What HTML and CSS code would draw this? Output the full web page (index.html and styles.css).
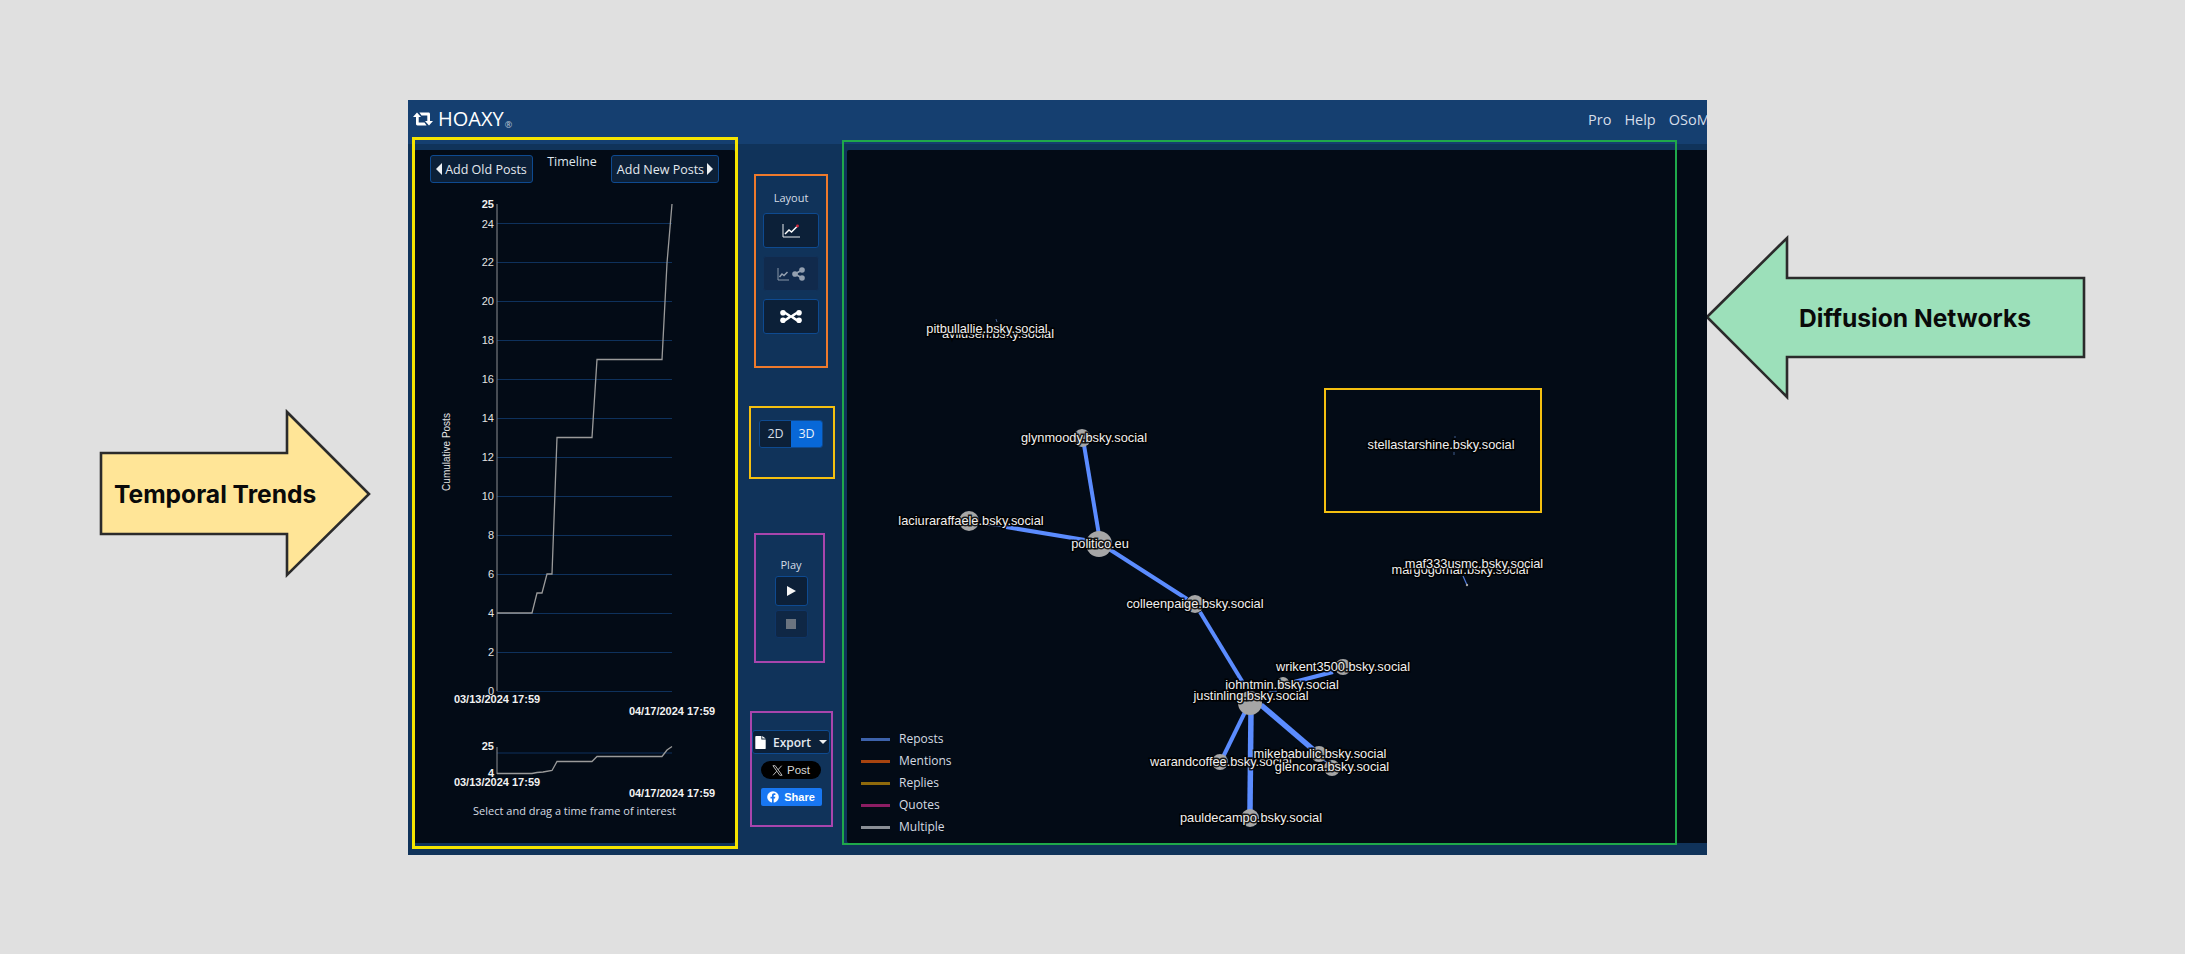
FILE: index.html
```html
<!doctype html>
<html>
	<head>
		<title>Hoaxy</title>
		<link rel="stylesheet" href="styles.css">
	</head>
	<body>
		<div class="slide">

			<svg class="arrow arrow-temporal" viewBox="90 400 300 190">
				<polygon points="101,453 287,453 287,412 369,494 287,575 287,534 101,534"></polygon>
			</svg>
			<div class="arrow-label label-temporal">Temporal Trends</div>

			<svg class="arrow arrow-diffusion" viewBox="1700 230 390 175">
				<polygon points="1707,317 1787,238 1787,278 2084,278 2084,357 1787,357 1787,397"></polygon>
			</svg>
			<div class="arrow-label label-diffusion">Diffusion Networks</div>

			<div class="app">
				<div class="nav">
					<div class="brand">
						<svg class="brand-icon" viewBox="0 0 20 14">
							<path d="M0 5 4 .5 8 5H5.7V10.6H11.5L13.6 13.4H4.6C3.5 13.4 3 12.8 3 11.8V5Z"></path>
							<path d="M20 9 16 13.5 12 9H14.3V3.4H8.5L6.4 .6H15.4C16.5 .6 17 1.2 17 2.2V9Z"></path>
						</svg>
						<span class="brand-name">HOAXY</span><span class="brand-mark">®</span>
					</div>
					<div class="nav-links">
						<span>Pro</span>
						<span>Help</span>
						<span class="nav-cut">OSoMe</span>
					</div>
				</div>

				<div class="main">
					<div class="timeline">
						<div class="timeline-head">
							<div class="btn btn-posts btn-old"><span class="tri tri-left"></span>Add Old Posts</div>
							<div class="timeline-title">Timeline</div>
							<div class="btn btn-posts btn-new">Add New Posts<span class="tri tri-right"></span></div>
						</div>
						<svg class="chart" viewBox="414 190 321 610">
							<g class="grid">
								<line x1="497" x2="672" y1="223.5" y2="223.5"></line>
								<line x1="497" x2="672" y1="262.5" y2="262.5"></line>
								<line x1="497" x2="672" y1="301.5" y2="301.5"></line>
								<line x1="497" x2="672" y1="340.5" y2="340.5"></line>
								<line x1="497" x2="672" y1="379.5" y2="379.5"></line>
								<line x1="497" x2="672" y1="418.5" y2="418.5"></line>
								<line x1="497" x2="672" y1="457.5" y2="457.5"></line>
								<line x1="497" x2="672" y1="496.5" y2="496.5"></line>
								<line x1="497" x2="672" y1="535.5" y2="535.5"></line>
								<line x1="497" x2="672" y1="574.5" y2="574.5"></line>
								<line x1="497" x2="672" y1="613.5" y2="613.5"></line>
								<line x1="497" x2="672" y1="652.5" y2="652.5"></line>
								<line x1="497" x2="672" y1="691.5" y2="691.5"></line>
								<line x1="497" x2="672" y1="753" y2="753"></line>
							</g>
							<line class="axis" x1="497" x2="497" y1="204" y2="691"></line>
							<line class="axis" x1="497" x2="497" y1="747" y2="774"></line>
							<polyline class="trend" points="497,613 532,613 537,593 542,593 547,574 552,574 557,437.5 592,437.5 597,359.5 662,359.5 667,263 672,204"></polyline>
							<polyline class="trend" points="497,773.5 532,773.5 537,772.5 543,772 552,770.5 557,761.5 592,761.5 597,756.5 662,756.5 667,750 672,746.5"></polyline>
							<g class="ticks">
								<text class="tick-top" x="494" y="208">25</text>
								<text x="494" y="228">24</text>
								<text x="494" y="266">22</text>
								<text x="494" y="305">20</text>
								<text x="494" y="344">18</text>
								<text x="494" y="383">16</text>
								<text x="494" y="422">14</text>
								<text x="494" y="461">12</text>
								<text x="494" y="500">10</text>
								<text x="494" y="539">8</text>
								<text x="494" y="578">6</text>
								<text x="494" y="617">4</text>
								<text x="494" y="656">2</text>
								<text x="494" y="695">0</text>
								<text class="tick-top" x="494" y="750">25</text>
								<text class="tick-top" x="494" y="777">4</text>
							</g>
							<text class="axis-title" transform="translate(450 452) rotate(-90)">Cumulative Posts</text>
							<text class="date" x="497" y="703">03/13/2024 17:59</text>
							<text class="date" x="672" y="715">04/17/2024 17:59</text>
							<text class="date" x="497" y="786">03/13/2024 17:59</text>
							<text class="date" x="672" y="797">04/17/2024 17:59</text>
						</svg>
						<div class="timeline-hint">Select and drag a time frame of interest</div>
					</div>

					<div class="controls">
						<div class="ctl-label ctl-layout">Layout</div>
						<div class="btn btn-layout">
							<svg class="icon-chart" viewBox="0 0 18 14">
								<path class="ic-axis" d="M1 0V13H18"></path>
								<path class="ic-line" d="M3 10 7 6 9.5 8 15 2.5"></path>
								<circle class="ic-red" cx="15.5" cy="2" r="1.4"></circle>
							</svg>
						</div>
						<div class="btn btn-layout btn-off">
							<svg class="icon-mixed" viewBox="0 0 29 14">
								<path class="ic-axis" d="M1 1V13H12"></path>
								<path class="ic-line" d="M2.5 10 5 7 7 8.5 10.5 5"></path>
								<path class="ic-link" d="M25 3 18 7 25 11"></path>
								<circle class="ic-dot" cx="25" cy="3" r="2.8"></circle>
								<circle class="ic-dot" cx="18" cy="7" r="2.8"></circle>
								<circle class="ic-dot" cx="25" cy="11" r="2.8"></circle>
							</svg>
						</div>
						<div class="btn btn-layout">
							<svg class="icon-net" viewBox="0 0 22 13">
								<path class="ic-link ic-bold" d="M3 2.5C8 3 9 6.500 11 6.500S14 3 19 2.500M3 10.500C8 10 9 6.500 11 6.500S14 10 19 10.500"></path>
								<circle class="ic-dot" cx="3" cy="2.800" r="2.800"></circle>
								<circle class="ic-dot" cx="3" cy="10.200" r="2.800"></circle>
								<circle class="ic-dot" cx="19" cy="2.800" r="2.800"></circle>
								<circle class="ic-dot" cx="19" cy="10.200" r="2.800"></circle>
							</svg>
						</div>

						<div class="dim-switch">
							<div class="dim dim-2d">2D</div>
							<div class="dim dim-3d">3D</div>
						</div>

						<div class="ctl-label ctl-play">Play</div>
						<div class="btn btn-play"><span class="play-tri"></span></div>
						<div class="btn btn-stop"><span class="stop-box"></span></div>

						<div class="btn btn-export">
							<svg class="icon-file" viewBox="0 0 12 15">
								<path d="M0 1C0 .4.4 0 1 0H7V4H12V14C12 14.600 11.600 15 11 15H1C.4 15 0 14.600 0 14ZM8 0 12 3H8Z"></path>
							</svg>
							<span>Export</span>
							<span class="caret"></span>
						</div>
						<div class="btn-x">
							<svg class="icon-x" viewBox="0 0 12 12">
								<path class="x-thin" d="M1 .8H3.500L11 11.200H8.500ZM10.500.8 6.500 5.300M5.200 6.700 1.200 11.200"></path>
							</svg>
							<span>Post</span>
						</div>
						<div class="btn-fb">
							<svg class="icon-fb" viewBox="0 0 12 12">
								<circle cx="6" cy="6" r="5.800"></circle>
								<path class="fb-f" d="M5 12V7.600H3.500V5.800H5V4.500C5 3.100 5.900 2.300 7.100 2.300L8.400 2.400V3.900H7.600C6.900 3.900 6.700 4.300 6.700 4.800V5.800H8.300L8 7.600H6.700V12Z"></path>
							</svg>
							<span>Share</span>
						</div>
					</div>

					<div class="network">
						<svg class="graph" viewBox="846 150 862 693">
							<g class="edges">
								<line class="e-mid" x1="1083" y1="445" x2="1098" y2="535"></line>
								<line class="e-mid" x1="1005" y1="527" x2="1090" y2="541"></line>
								<line class="e-thin" x1="985" y1="525" x2="1005" y2="527"></line>
								<line class="e-mid" x1="1108" y1="549" x2="1186" y2="599"></line>
								<line class="e-mid" x1="1199" y1="612" x2="1244" y2="686"></line>
								<line class="e-mid" x1="1245" y1="710" x2="1222" y2="757"></line>
								<line class="e-wide" x1="1250" y1="710" x2="1249" y2="810"></line>
								<line class="e-wide" x1="1260" y1="705" x2="1315" y2="752"></line>
								<line class="e-mid" x1="1293" y1="682" x2="1332" y2="672"></line>
								<line class="e-thin" x1="1267" y1="692" x2="1276" y2="691"></line>
								<line class="e-thin" x1="1322" y1="760" x2="1327" y2="763"></line>
								<line class="e-thin" x1="1462" y1="576" x2="1466" y2="585"></line>
								<line class="e-hair" x1="995" y1="319" x2="996" y2="322"></line>
								<line class="e-hair" x1="1454" y1="436" x2="1454" y2="438"></line>
								<line class="e-hair" x1="1453" y1="452" x2="1453" y2="455"></line>
							</g>
							<g class="nodes">
								<circle cx="1081" cy="438" r="9"></circle>
								<circle cx="1098" cy="544" r="13"></circle>
								<circle cx="968" cy="521" r="10"></circle>
								<circle cx="1194" cy="604" r="9"></circle>
								<circle cx="1342" cy="667" r="8"></circle>
								<circle cx="1282" cy="683" r="6"></circle>
								<circle cx="1249" cy="703" r="12"></circle>
								<circle cx="1219" cy="762" r="8"></circle>
								<circle cx="1249" cy="818" r="9"></circle>
								<circle cx="1318" cy="754" r="8"></circle>
								<circle cx="1331" cy="768" r="8"></circle>
								<circle cx="1466" cy="585" r="1.200"></circle>
							</g>
							<g class="names">
								<text x="997" y="338">avilusen.bsky.social</text>
								<text x="986" y="333">pitbullallie.bsky.social</text>
								<text x="1083" y="442">glynmoody.bsky.social</text>
								<text x="970" y="525">laciuraraffaele.bsky.social</text>
								<text x="1099" y="548">politico.eu</text>
								<text x="1194" y="608">colleenpaige.bsky.social</text>
								<text x="1342" y="671">wrikent3500.bsky.social</text>
								<text x="1281" y="689">johntmin.bsky.social</text>
								<text x="1250" y="700">justinling.bsky.social</text>
								<text x="1220" y="766">warandcoffee.bsky.social</text>
								<text x="1331" y="771">glencora.bsky.social</text>
								<text x="1319" y="758">mikebabulic.bsky.social</text>
								<text x="1250" y="822">pauldecampo.bsky.social</text>
								<text x="1440" y="449">stellastarshine.bsky.social</text>
								<text x="1459" y="574">margogomar.bsky.social</text>
								<text x="1473" y="568">maf333usmc.bsky.social</text>
							</g>
						</svg>
						<ul class="legend">
							<li><span class="swatch sw-reposts"></span>Reposts</li>
							<li><span class="swatch sw-mentions"></span>Mentions</li>
							<li><span class="swatch sw-replies"></span>Replies</li>
							<li><span class="swatch sw-quotes"></span>Quotes</li>
							<li><span class="swatch sw-multiple"></span>Multiple</li>
						</ul>
					</div>
				</div>
			</div>

			<div class="frame frame-timeline"></div>
			<div class="frame frame-network"></div>
			<div class="frame frame-layout"></div>
			<div class="frame frame-dim"></div>
			<div class="frame frame-play"></div>
			<div class="frame frame-export"></div>
			<div class="frame frame-node"></div>

		</div>
	</body>
</html>
```

FILE: styles.css
```css
body {
	margin: 0;
	background: #e0e0e0;
	font-family: "Open Sans", "Noto Sans", sans-serif;
}

.slide {
	position: relative;
	width: 2185px;
	height: 954px;
	overflow: hidden;
}

/* ARROWS */
.arrow {
	position: absolute;
}

.arrow polygon {
	stroke: #2b2b2b;
	stroke-width: 2.600px;
}

.arrow-temporal {
	left: 90px;
	top: 400px;
	width: 300px;
	height: 190px;
}

.arrow-temporal polygon {
	fill: #ffe597;
}

.arrow-diffusion {
	left: 1700px;
	top: 230px;
	width: 390px;
	height: 175px;
}

.arrow-diffusion polygon {
	fill: #9ce0ba;
}

.arrow-label {
	position: absolute;
	font-family: Inter, sans-serif;
	font-weight: 700;
	font-size: 24.600px;
	line-height: 28px;
	color: #0a0a0a;
	white-space: nowrap;
}

.label-temporal {
	left: 114px;
	top: 480px;
}

.label-diffusion {
	left: 1799px;
	top: 304px;
}

/* APP */
.app {
	display: flex;
	flex-direction: column;
	width: 1299px;
	height: 755px;
	margin: 100px 0 0 408px;
	background: #10335a;
	color: #dfe6ee;
	overflow: hidden;
}

.nav {
	display: flex;
	justify-content: space-between;
	align-items: center;
	flex: none;
	box-sizing: border-box;
	height: 44px;
	padding-bottom: 6px;
	background: #153f70;
}

.brand {
	display: flex;
	align-items: center;
	padding-left: 5px;
	color: #fff;
}

.brand-icon {
	width: 20px;
	height: 14px;
	fill: #fff;
}

.brand-name {
	margin-left: 5px;
	font-size: 20px;
	line-height: 24px;
}

.brand-mark {
	margin: 10px 0 0 1px;
	font-size: 9px;
	color: #b9c4d2;
}

.nav-links {
	display: flex;
	gap: 13px;
	width: 119px;
	font-size: 14.500px;
	color: #d5deea;
	white-space: nowrap;
}

.main {
	display: flex;
	flex: 1;
	min-height: 0;
	padding: 6px 0 12px 6px;
}

.btn {
	display: flex;
	align-items: center;
	justify-content: center;
	box-sizing: border-box;
	border: 1px solid #0e4a90;
	border-radius: 3px;
	background: #0c2038;
	color: #e4e9ef;
}

/* TIMELINE */
.timeline {
	flex: none;
	width: 321px;
	background: #030b16;
	border-radius: 2px;
}

.timeline-head {
	display: flex;
	justify-content: space-between;
	align-items: flex-start;
	padding: 5px 16px 0 16px;
}

.btn-posts {
	height: 28px;
	gap: 3px;
	font-size: 12.500px;
	white-space: nowrap;
}

.btn-old {
	width: 103px;
}

.btn-new {
	width: 108px;
}

.timeline-title {
	padding-top: 1px;
	font-size: 12.500px;
	line-height: 12px;
}

.tri {
	width: 0;
	height: 0;
	border-top: 6px solid transparent;
	border-bottom: 6px solid transparent;
}

.tri-left {
	border-right: 6px solid #eef1f4;
}

.tri-right {
	border-left: 6px solid #eef1f4;
}

.chart {
	display: block;
	width: 321px;
	height: 610px;
	margin-top: 7px;
}

.grid line {
	stroke: #0e315c;
	stroke-width: 1px;
}

.axis {
	stroke: #8d8f92;
	stroke-width: 1px;
}

.trend {
	fill: none;
	stroke: #9a9a9a;
	stroke-width: 1.300px;
}

.ticks text {
	font-family: "Liberation Sans", sans-serif;
	font-size: 11px;
	fill: #e4e4e4;
	text-anchor: end;
}

.ticks .tick-top {
	font-weight: bold;
	fill: #f0f0f0;
}

.axis-title {
	font-family: "Liberation Sans", sans-serif;
	font-size: 10px;
	fill: #e4e4e4;
	text-anchor: middle;
}

.date {
	font-family: "Liberation Sans", sans-serif;
	font-size: 11px;
	font-weight: bold;
	fill: #f2f2f2;
	text-anchor: middle;
}

.timeline-hint {
	margin-top: 3px;
	font-size: 11px;
	line-height: 16px;
	text-align: center;
	color: #d5dbe2;
}

/* CONTROLS */
.controls {
	display: flex;
	flex-direction: column;
	align-items: center;
	flex: none;
	width: 112px;
}

.ctl-label {
	font-size: 11px;
	line-height: 16px;
	color: #d5dde6;
}

.ctl-layout {
	margin-top: 40px;
}

.btn-layout {
	width: 56px;
	height: 35px;
	margin-top: 7px;
}

.btn-layout + .btn-layout {
	margin-top: 8px;
}

.btn-off {
	border-color: #12325a;
	background: #12294a;
	opacity: 0.85;
}

.icon-chart {
	width: 18px;
	height: 14px;
}

.icon-mixed {
	width: 29px;
	height: 14px;
	opacity: 0.65;
}

.icon-net {
	width: 22px;
	height: 13px;
}

.ic-axis {
	fill: none;
	stroke: #e8ecef;
	stroke-width: 1px;
}

.ic-line {
	fill: none;
	stroke: #fff;
	stroke-width: 1.500px;
}

.ic-red {
	fill: #d8283c;
}

.ic-link {
	fill: none;
	stroke: #fff;
	stroke-width: 1.800px;
}

.ic-bold {
	stroke-width: 2.500px;
}

.ic-dot {
	fill: #fff;
}

.dim-switch {
	display: flex;
	box-sizing: border-box;
	width: 64px;
	height: 28px;
	margin-top: 86px;
	border: 1px solid #0e4a90;
	border-radius: 3px;
	overflow: hidden;
	font-size: 12.500px;
	line-height: 26px;
	text-align: center;
}

.dim {
	flex: 1;
}

.dim-2d {
	background: #0c2038;
	color: #d5dde6;
}

.dim-3d {
	background: #0868d8;
	color: #e8f0fa;
}

.ctl-play {
	margin-top: 109px;
}

.btn-play {
	width: 33px;
	height: 30px;
	margin-top: 3px;
}

.btn-stop {
	width: 33px;
	height: 28px;
	margin-top: 4px;
	border-color: #0f3566;
	background: #0f2745;
}

.play-tri {
	border-left: 9px solid #f6f6f6;
	border-top: 5px solid transparent;
	border-bottom: 5px solid transparent;
}

.stop-box {
	width: 10px;
	height: 10px;
	background: #6b7480;
}

.btn-export {
	gap: 7px;
	width: 78px;
	height: 24px;
	margin-top: 92px;
	font-size: 12px;
	font-weight: 600;
}

.icon-file {
	width: 11px;
	height: 13px;
	fill: #fff;
}

.caret {
	margin-left: 1px;
	border-top: 4px solid #f0f0f0;
	border-left: 4px solid transparent;
	border-right: 4px solid transparent;
}

.btn-x {
	display: flex;
	align-items: center;
	justify-content: center;
	gap: 4px;
	width: 60px;
	height: 18px;
	margin-top: 7px;
	border-radius: 9px;
	background: #000;
	font-family: "Liberation Sans", sans-serif;
	font-size: 11.500px;
	color: #d9d9d9;
}

.icon-x {
	width: 11px;
	height: 11px;
}

.x-thin {
	fill: none;
	stroke: #c8c8c8;
	stroke-width: 1px;
}

.btn-fb {
	display: flex;
	align-items: center;
	justify-content: center;
	gap: 5px;
	width: 61px;
	height: 18px;
	margin-top: 9px;
	border-radius: 2px;
	background: #1877f2;
	font-family: "Liberation Sans", sans-serif;
	font-size: 11px;
	font-weight: bold;
	color: #fff;
}

.icon-fb {
	width: 12px;
	height: 12px;
	fill: #fff;
}

.fb-f {
	fill: #1877f2;
}

/* NETWORK */
.network {
	position: relative;
	flex: 1;
	background: #030b16;
	border-radius: 2px 0 0 2px;
}

.graph {
	display: block;
	width: 862px;
	height: 693px;
}

.e-hair {
	stroke: #5c7fc0;
	stroke-width: 0.700px;
}

.e-thin {
	stroke: #4d78d8;
	stroke-width: 1.200px;
}

.e-mid {
	stroke: #5b8cff;
	stroke-width: 4px;
}

.e-wide {
	stroke: #5b8cff;
	stroke-width: 5.500px;
}

.nodes circle {
	fill: #a6a6a6;
}

.names text {
	font-family: "Liberation Sans", sans-serif;
	font-size: 12.800px;
	fill: #f0f0f0;
	text-anchor: middle;
	paint-order: stroke;
	stroke: #000;
	stroke-opacity: 0.85;
	stroke-width: 3px;
}

.legend {
	position: absolute;
	left: 14px;
	top: 578px;
	margin: 0;
	padding: 0;
	list-style: none;
	font-size: 12px;
	line-height: 22px;
	color: #d5dbe2;
}

.legend li {
	display: flex;
	align-items: center;
}

.swatch {
	width: 29px;
	height: 3px;
	margin-right: 9px;
}

.sw-reposts {
	background: #3d62ab;
}

.sw-mentions {
	background: #a8440f;
}

.sw-replies {
	background: #8f6a0c;
}

.sw-quotes {
	background: #8c1d63;
}

.sw-multiple {
	background: #8a8f96;
}

/* ANNOTATION FRAMES */
.frame {
	position: absolute;
	box-sizing: border-box;
	border-style: solid;
}

.frame-timeline {
	left: 412px;
	top: 137px;
	width: 326px;
	height: 712px;
	border-width: 3px;
	border-color: #f5e400;
}

.frame-network {
	left: 842px;
	top: 140px;
	width: 835px;
	height: 705px;
	border-width: 2px;
	border-color: #1fa84a;
}

.frame-layout {
	left: 754px;
	top: 174px;
	width: 74px;
	height: 194px;
	border-width: 2px;
	border-color: #ee7a2c;
}

.frame-dim {
	left: 749px;
	top: 406px;
	width: 86px;
	height: 73px;
	border-width: 2px;
	border-color: #f5c010;
}

.frame-play {
	left: 754px;
	top: 533px;
	width: 71px;
	height: 130px;
	border-width: 2px;
	border-color: #a845ad;
}

.frame-export {
	left: 750px;
	top: 711px;
	width: 83px;
	height: 116px;
	border-width: 2px;
	border-color: #a845ad;
}

.frame-node {
	left: 1324px;
	top: 388px;
	width: 218px;
	height: 125px;
	border-width: 2px;
	border-color: #f5c010;
}
```
